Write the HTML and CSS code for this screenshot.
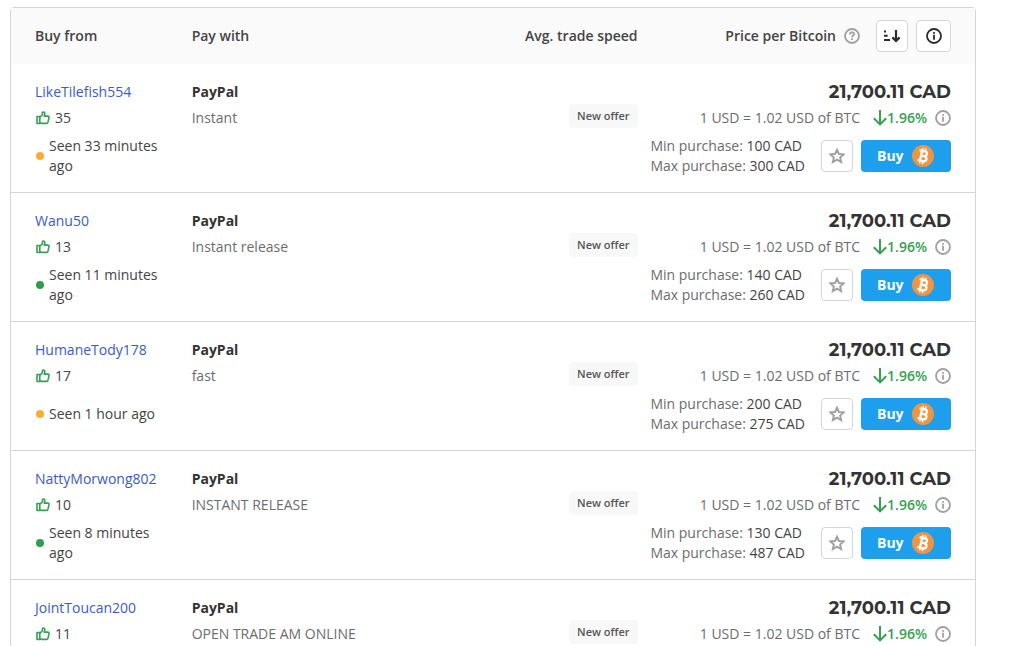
FILE: index.html
```html
<!DOCTYPE html>
<html lang="en">
<head>
  <meta charset="UTF-8" />
  <meta name="viewport" content="width=device-width, initial-scale=1.0"/>
  <title>Buy Bitcoin</title>
  <link rel="stylesheet" href="styles.css">
</head>
<body>

  <!-- Shared icons -->
  <svg class="sprite" aria-hidden="true">
    <symbol id="thumb" viewBox="0 0 14 14">
      <path d="M1 5.5h2.8v7H1zM3.8 6.4 6.4 3.8V1.8c0-1.2 2.2-1.2 2.4.4.1 1-.2 2-.6 2.9h3.6c1 0 1.4.7 1.2 1.5l-1 4.5c-.2.8-.7 1.3-1.5 1.3H5.6l-1.8-.8" fill="none" stroke="currentColor" stroke-width="1.6" stroke-linejoin="round"/>
    </symbol>
    <symbol id="info" viewBox="0 0 16 16">
      <circle cx="8" cy="8" r="7" fill="none" stroke="currentColor" stroke-width="1.8"/>
      <path d="M7.1 4.1h1.8v1.6H7.1zM7.1 6.8h1.8v5H7.1z" fill="currentColor"/>
    </symbol>
    <symbol id="question" viewBox="0 0 16 16">
      <circle cx="8" cy="8" r="7" fill="none" stroke="currentColor" stroke-width="1.8"/>
      <path d="M5.8 6.5C5.8 5 6.8 4.3 8 4.3s2.2.7 2.2 1.8C10.2 7.5 8 7.5 8 9.2" fill="none" stroke="currentColor" stroke-width="1.7"/>
      <path d="M7.1 10.2h1.8v1.7H7.1z" fill="currentColor"/>
    </symbol>
    <symbol id="sort" viewBox="0 0 18 14">
      <path d="M1 1.5h2v2H1zM1 5.7h3.6v2H1zM1 10h6v2H1z" fill="currentColor"/>
      <path d="M13 1v11M9.4 8.4l3.6 3.6 3.6-3.6" fill="none" stroke="currentColor" stroke-width="2.2"/>
    </symbol>
    <symbol id="down" viewBox="0 0 14 16">
      <path d="M7 0v14.2M.8 8.2 7 14.4l6.2-6.2" fill="none" stroke="currentColor" stroke-width="2"/>
    </symbol>
    <symbol id="star" viewBox="0 0 16 16">
      <path d="M8 1.7l1.9 4.3 4.7.4-3.5 3.1 1.1 4.6L8 11.6l-4.2 2.5 1.1-4.6L1.4 6.4l4.7-.4z" fill="none" stroke="currentColor" stroke-width="1.9" stroke-linejoin="miter"/>
    </symbol>
    <symbol id="bitcoin" viewBox="0 0 22 22">
      <circle cx="11" cy="11" r="11" fill="#ef9542"/>
      <g transform="rotate(13 11 11)" fill="none" stroke="#fff">
        <path d="M6.4 6h5.5c3.4 0 3.4 4.8 0 4.8H9M11.9 10.8c4.2 0 4.2 5.2 0 5.2H6.4M9 6v10" stroke-width="2.3"/>
        <path d="M9.4 3v3M12.2 3v3M9.4 16v3M12.2 16v3" stroke-width="1.6"/>
      </g>
    </symbol>
  </svg>

  <table class="offers">
    <thead>
      <tr>
        <th class="col-user">Buy from</th>
        <th class="col-method">Pay with</th>
        <th class="col-speed">Avg. trade speed</th>
        <th class="col-price">
          <div class="price-head">
            <span>Price per Bitcoin</span>
            <svg class="icon-info"><use href="#question"/></svg>
            <button class="square sort" aria-label="Sort"><svg><use href="#sort"/></svg></button>
            <button class="square about" aria-label="About offers"><svg class="icon-info"><use href="#info"/></svg></button>
          </div>
        </th>
      </tr>
    </thead>
    <tbody id="offerRows">
      <!-- Offers will be rendered here -->
    </tbody>
  </table>

  <script>
    const offers = [
      { user: "LikeTilefish554", likes: 35, seen: "Seen 33 minutes ago", status: "away", terms: "Instant", min: 100, max: 300 },
      { user: "Wanu50", likes: 13, seen: "Seen 11 minutes ago", status: "online", terms: "Instant release", min: 140, max: 260 },
      { user: "HumaneTody178", likes: 17, seen: "Seen 1 hour ago", status: "away", terms: "fast", min: 200, max: 275 },
      { user: "NattyMorwong802", likes: 10, seen: "Seen 8 minutes ago", status: "online", terms: "INSTANT RELEASE", min: 130, max: 487 },
      { user: "JointToucan200", likes: 11, terms: "OPEN TRADE AM ONLINE" }
    ];

    function renderOffers() {
      const tbody = document.getElementById("offerRows");

      offers.forEach((offer) => {
        const seen = offer.seen
          ? `<div class="seen"><span class="dot ${offer.status}"></span><span>${offer.seen}</span></div>`
          : `<div class="seen"></div>`;
        // offers without limits cannot be bought yet
        const actions = offer.min
          ? `<div class="actions">
              <div class="limits">
                <div>Min purchase: <span>${offer.min} CAD</span></div>
                <div>Max purchase: <span>${offer.max} CAD</span></div>
              </div>
              <button class="square star" aria-label="Add to favourites"><svg class="icon-star"><use href="#star"/></svg></button>
              <button class="buy">Buy <svg><use href="#bitcoin"/></svg></button>
            </div>`
          : "";

        const tr = document.createElement("tr");
        tr.innerHTML = `
          <td>
            <div class="title"><a href="#">${offer.user}</a></div>
            <div class="likes"><svg><use href="#thumb"/></svg>${offer.likes}</div>
            ${seen}
          </td>
          <td>
            <div class="title method">PayPal</div>
            <div class="terms">${offer.terms}</div>
          </td>
          <td class="col-speed"><span class="badge">New offer</span></td>
          <td class="col-price">
            <div class="price">21,700.11 CAD</div>
            <div class="rate">
              <span>1 USD = 1.02 USD of BTC</span>
              <span class="drop"><svg><use href="#down"/></svg>1.96%</span>
              <svg class="icon-info"><use href="#info"/></svg>
            </div>
            ${actions}
          </td>
        `;
        tbody.appendChild(tr);
      });
    }

    renderOffers();
  </script>

</body>
</html>
```
FILE: styles.css
```css
* {
  box-sizing: border-box;
}
body {
  font-family: "Open Sans", "Noto Sans", sans-serif;
  font-size: 14px;
  line-height: 20px;
  color: #444;
  background-color: #fff;
  margin: 0;
  padding: 7px 52px 0 10px;
  height: 100vh;
  overflow: hidden;
}
svg {
  display: block;
  flex: none;
}
.sprite {
  position: absolute;
  width: 0;
  height: 0;
}
.offers {
  width: 100%;
  table-layout: fixed;
  border-collapse: separate;
  border-spacing: 0;
  border: 1px solid #d5d5d5;
  border-radius: 4px;
}
th, td {
  padding: 16px 0 16px 24px;
  text-align: left;
  vertical-align: top;
}
th {
  padding-top: 12px;
  padding-bottom: 12px;
  vertical-align: middle;
  font-weight: 600;
  color: #444;
  background-color: #fafafa;
}
tbody tr + tr td {
  border-top: 1px solid #d5d5d5;
}
th.col-user { width: 16.25%; }
th.col-method { width: 28.75%; }
th.col-speed { width: 20%; }
.col-speed {
  text-align: right;
}
.col-price {
  padding-left: 0;
  padding-right: 24px;
}

/* Header */
.price-head {
  display: flex;
  align-items: center;
  justify-content: flex-end;
  gap: 8px;
}
.price-head .sort {
  margin-left: 8px;
}
.price-head .about {
  width: 35px;
}
.icon-info {
  width: 16px;
  height: 16px;
  color: #a0a0a0;
}
.about .icon-info {
  color: #2b2b2b;
}
.square {
  display: flex;
  align-items: center;
  justify-content: center;
  flex: none;
  width: 32px;
  height: 32px;
  padding: 0;
  border: 1px solid #d5d5d5;
  border-radius: 4px;
  background-color: #fff;
  color: #2b2b2b;
}
.sort svg {
  width: 18px;
  height: 14px;
}

/* Offer rows */
.title {
  line-height: 24px;
  margin-bottom: 4px;
}
.title a {
  color: #3a5bc7;
  text-decoration: none;
}
.method {
  font-weight: bold;
  color: #333;
}
.terms {
  color: #6c6c6c;
}
.likes {
  display: flex;
  align-items: center;
  gap: 5px;
  padding-left: 1px;
}
.likes svg {
  width: 14px;
  height: 14px;
  color: #35a050;
}
.seen {
  display: flex;
  align-items: center;
  gap: 5px;
  height: 40px;
  margin-top: 8px;
  padding-left: 1px;
}
.dot {
  flex: none;
  width: 8px;
  height: 8px;
  border-radius: 50%;
}
.away { background-color: #f9ae33; }
.online { background-color: #2f9e4c; }
.badge {
  display: inline-block;
  margin-top: 24px;
  padding: 2px 8px;
  border-radius: 4px;
  background-color: #f8f8f8;
  color: #555;
  font-size: 11px;
  font-weight: 600;
}
.price {
  margin-bottom: 4px;
  font-family: Montserrat, "Open Sans", sans-serif;
  font-size: 18px;
  font-weight: bold;
  line-height: 24px;
  text-align: right;
  color: #333;
}
.rate {
  display: flex;
  align-items: center;
  justify-content: flex-end;
  gap: 8px;
  color: #6c6c6c;
}
.drop {
  display: flex;
  align-items: center;
  margin-left: 5px;
  font-weight: 600;
  color: #35a050;
}
.drop svg {
  width: 14px;
  height: 16px;
}
.actions {
  display: flex;
  align-items: center;
  justify-content: flex-end;
  gap: 8px;
  margin-top: 8px;
}
.limits {
  margin-right: 8px;
  text-align: left;
  color: #6c6c6c;
}
.limits span {
  color: #444;
}
.star {
  color: #a0a0a0;
}
.icon-star {
  width: 16px;
  height: 16px;
}
.buy {
  display: flex;
  align-items: center;
  gap: 8px;
  width: 90px;
  height: 32px;
  padding: 0 16px;
  border: 0;
  border-radius: 4px;
  background-color: #1e9fee;
  color: #fff;
  font-family: inherit;
  font-size: 14px;
  font-weight: bold;
  line-height: 20px;
}
.buy svg {
  width: 22px;
  height: 22px;
}
```
